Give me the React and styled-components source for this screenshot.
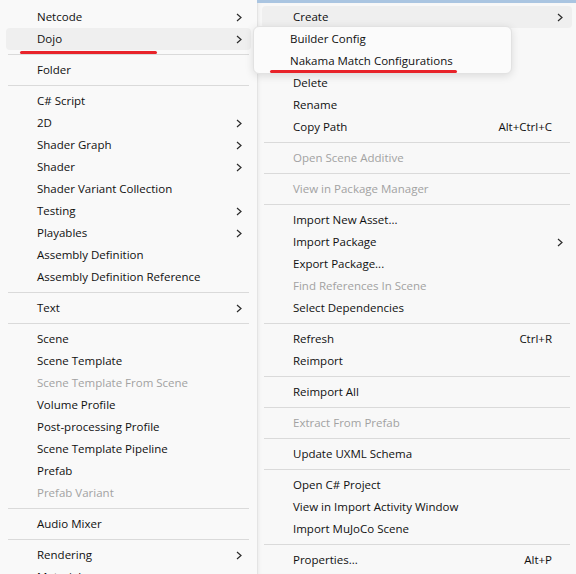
import React from 'react';
import styled, { createGlobalStyle } from 'styled-components';

const GlobalStyle = createGlobalStyle`
  html, body {
    margin: 0;
    padding: 0;
    background: #f9f9f9;
  }
  body {
    font-family: "Open Sans", "Noto Sans", "Liberation Sans", sans-serif;
    font-size: 11.5px;
    color: #1a1a1a;
  }
`;

const leftItems = [
  { label: 'Netcode', sub: true },
  { label: 'Dojo', sub: true, active: true },
  'sep',
  { label: 'Folder' },
  'sep',
  { label: 'C# Script' },
  { label: '2D', sub: true },
  { label: 'Shader Graph', sub: true },
  { label: 'Shader', sub: true },
  { label: 'Shader Variant Collection' },
  { label: 'Testing', sub: true },
  { label: 'Playables', sub: true },
  { label: 'Assembly Definition' },
  { label: 'Assembly Definition Reference' },
  'sep',
  { label: 'Text', sub: true },
  'sep',
  { label: 'Scene' },
  { label: 'Scene Template' },
  { label: 'Scene Template From Scene', disabled: true },
  { label: 'Volume Profile' },
  { label: 'Post-processing Profile' },
  { label: 'Scene Template Pipeline' },
  { label: 'Prefab' },
  { label: 'Prefab Variant', disabled: true },
  'sep',
  { label: 'Audio Mixer' },
  'sep',
  { label: 'Rendering', sub: true },
  { label: 'Material' },
];

// the two rows under "Create" are hidden behind the open submenu
const rightItems = [
  { label: 'Create', sub: true, active: true },
  { label: '' },
  { label: '' },
  { label: 'Delete' },
  { label: 'Rename' },
  { label: 'Copy Path', shortcut: 'Alt+Ctrl+C' },
  'sep',
  { label: 'Open Scene Additive', disabled: true },
  'sep',
  { label: 'View in Package Manager', disabled: true },
  'sep',
  { label: 'Import New Asset...' },
  { label: 'Import Package', sub: true },
  { label: 'Export Package...' },
  { label: 'Find References In Scene', disabled: true },
  { label: 'Select Dependencies' },
  'sep',
  { label: 'Refresh', shortcut: 'Ctrl+R' },
  { label: 'Reimport' },
  'sep',
  { label: 'Reimport All' },
  'sep',
  { label: 'Extract From Prefab', disabled: true },
  'sep',
  { label: 'Update UXML Schema' },
  'sep',
  { label: 'Open C# Project' },
  { label: 'View in Import Activity Window' },
  { label: 'Import MuJoCo Scene' },
  'sep',
  { label: 'Properties...', shortcut: 'Alt+P' },
];

const createItems = ['Builder Config', 'Nakama Match Configurations'];

const Chevron = () => (
  <svg width="6" height="9" viewBox="0 0 6 9">
    <path d="M1 1 L5 4.5 L1 8" fill="none" stroke="#2b2b2b" strokeWidth="1.2" />
  </svg>
);

const MenuList = ({ items }) =>
  items.map((it, i) =>
    it === 'sep' ? (
      <Separator key={i} />
    ) : (
      <Row key={i} active={it.active} disabled={it.disabled}>
        <Label>{it.label}</Label>
        {it.shortcut && <Shortcut>{it.shortcut}</Shortcut>}
        {it.sub && (
          <Arrow>
            <Chevron />
          </Arrow>
        )}
      </Row>
    )
  );

const App = () => {
  return (
    <Page>
      <GlobalStyle />
      <LeftMenu>
        <MenuList items={leftItems} />
      </LeftMenu>
      <RightPane>
        <TitleStrip />
        <RightMenu>
          <MenuList items={rightItems} />
        </RightMenu>
      </RightPane>
      <SubMenu>
        {createItems.map((label) => (
          <SubRow key={label}>{label}</SubRow>
        ))}
      </SubMenu>
      <Mark x={20} y={51} w={137} />
      <Mark x={270} y={70} w={187} />
    </Page>
  );
};

export default App;

export const Page = styled.div`
  position: relative;
  display: flex;
  align-items: stretch;
  width: 576px;
  height: 574px;
  overflow: hidden;
  background: #f9f9f9;
`;

export const LeftMenu = styled.div`
  width: 257px;
  flex-shrink: 0;
  padding: 6px;
  box-sizing: border-box;
  background: #f9f9f9;
`;

export const RightPane = styled.div`
  flex: 1;
  display: flex;
  flex-direction: column;
`;

export const TitleStrip = styled.div`
  height: 3px;
  background: #aac5e1;
`;

export const RightMenu = styled.div`
  flex: 1;
  padding: 3px 4px;
  border-left: 1px solid #e4e4e4;
  background: #f8f8f8;
  box-shadow: inset 3px 0 4px -3px rgba(0, 0, 0, 0.08);
`;

export const Row = styled.div`
  display: flex;
  align-items: center;
  height: 22px;
  padding-left: 31px;
  border-radius: 4px;
  background: ${(p) => (p.active ? '#efefef' : 'transparent')};
  color: ${(p) => (p.disabled ? '#a2a2a2' : '#101010')};
  white-space: nowrap;
`;

export const Label = styled.span`
  flex: 1;
  line-height: 22px;
`;

export const Shortcut = styled.span`
  padding-right: 20px;
  line-height: 22px;
`;

export const Arrow = styled.span`
  display: flex;
  align-items: center;
  padding-right: 9px;
`;

export const Separator = styled.div`
  height: 1px;
  margin: 4px 2px;
  background: #dadada;
`;

export const SubMenu = styled.div`
  position: absolute;
  left: 253px;
  top: 26px;
  width: 259px;
  padding: 1px 0;
  box-sizing: border-box;
  border: 1px solid #e2e2e2;
  border-radius: 6px;
  background: #fbfbfb;
  box-shadow: 0 2px 8px rgba(0, 0, 0, 0.12);
  z-index: 2;
`;

export const SubRow = styled.div`
  height: 22px;
  line-height: 22px;
  padding-left: 36px;
  color: #101010;
  white-space: nowrap;
`;

export const Mark = styled.div`
  position: absolute;
  left: ${(p) => p.x}px;
  top: ${(p) => p.y}px;
  width: ${(p) => p.w}px;
  height: 3px;
  border-radius: 2px;
  background: #e8232a;
  z-index: 3;
`;
